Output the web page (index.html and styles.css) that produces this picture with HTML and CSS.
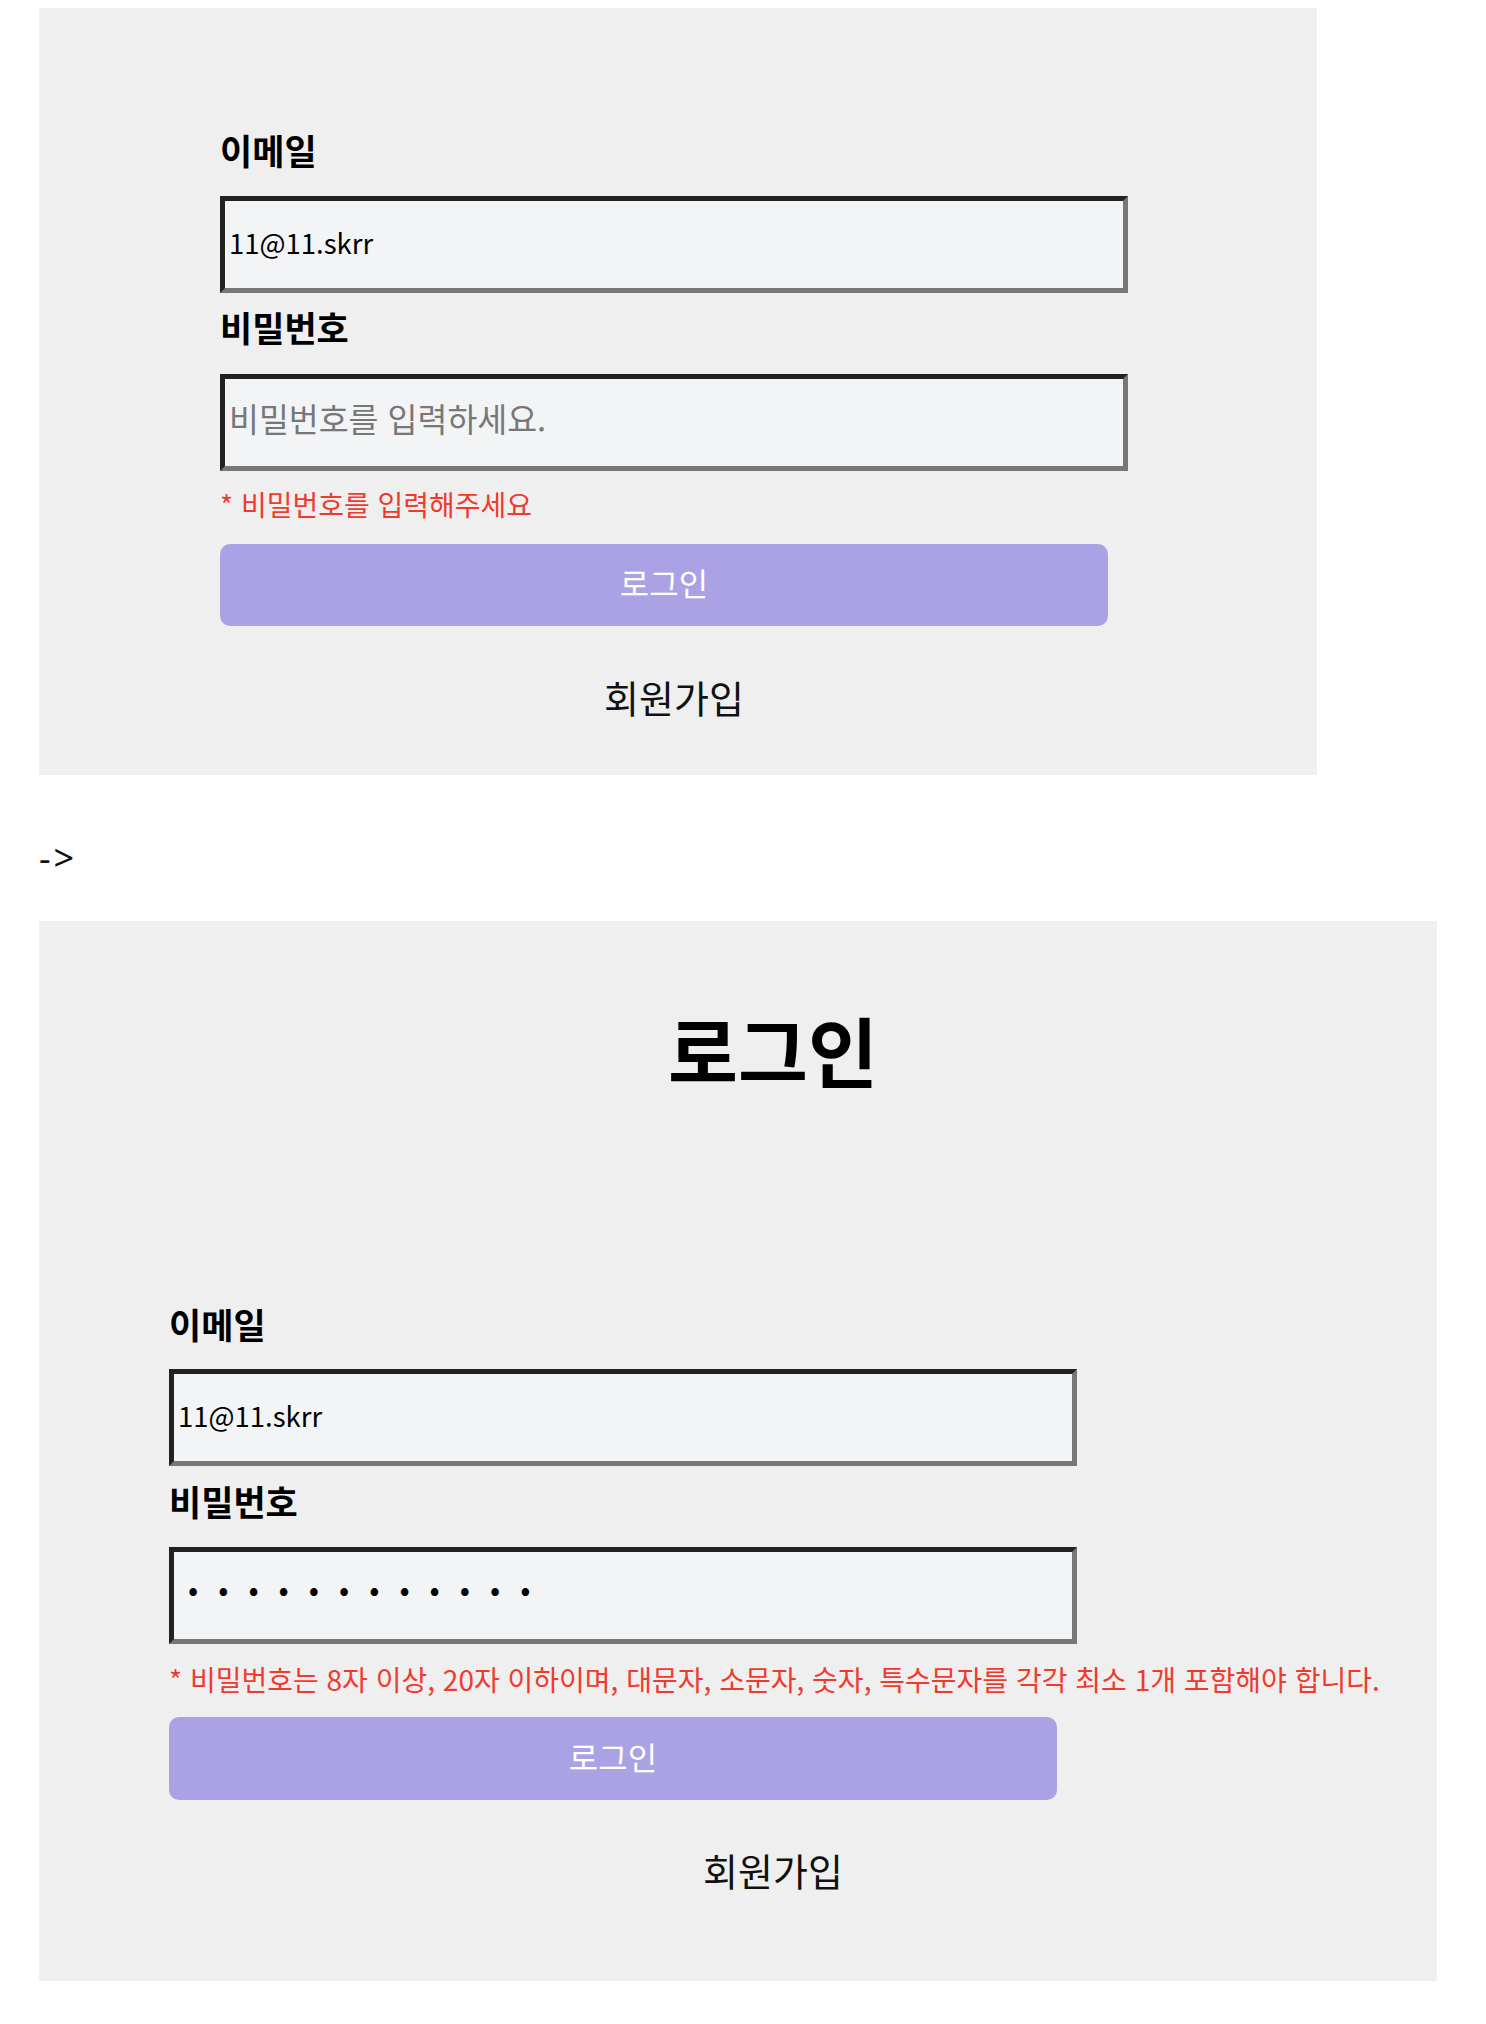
FILE: index.html
```html
<!DOCTYPE html>
<html lang="ko">
<head>
<meta charset="utf-8">
<title>로그인 변경</title>
<link rel="stylesheet" href="styles.css">
</head>
<body>
  <section class="panel panel-before">
    <form class="login-form">
      <label class="field-label">이메일</label>
      <input class="field-input" type="email" value="11@11.skrr">
      <label class="field-label">비밀번호</label>
      <input class="field-input" type="password" placeholder="비밀번호를 입력하세요.">
      <p class="error">* 비밀번호를 입력해주세요</p>
      <button class="login-btn" type="button">로그인</button>
      <a class="signup">회원가입</a>
    </form>
  </section>

  <p class="arrow">-&gt;</p>

  <section class="panel panel-after">
    <form class="login-form">
      <h1 class="title">로그인</h1>
      <label class="field-label">이메일</label>
      <input class="field-input" type="email" value="11@11.skrr">
      <label class="field-label">비밀번호</label>
      <input class="field-input pw" type="password" value="abcdefghijkl">
      <p class="error">* 비밀번호는 8자 이상, 20자 이하이며, 대문자, 소문자, 숫자, 특수문자를 각각 최소 1개 포함해야 합니다.</p>
      <button class="login-btn" type="button">로그인</button>
      <a class="signup">회원가입</a>
    </form>
  </section>
</body>
</html>
```
FILE: styles.css
```css
html, body {
  margin: 0;
  padding: 0;
  background: #ffffff;
}

body {
  padding: 8px 0 0 39px;
  font-family: "Noto Sans CJK KR", "Noto Sans", sans-serif;
  color: #000;
}

.panel {
  box-sizing: border-box;
  background: #efefef;
}

.panel-before {
  width: 1278px;
  padding: 122px 0 58px 181px;
  --g-label-input: 26px;
  --g-input-label: 14px;
  --g-label-input2: 27px;
  --g-input-error: 18px;
  --g-error-btn: 25px;
  --g-btn-signup: 51px;
  --btn-h: 82px;
}

.panel-after {
  width: 1398px;
  padding: 88px 0 91px 130px;
  --g-label-input: 25px;
  --g-input-label: 15px;
  --g-label-input2: 26px;
  --g-input-error: 20px;
  --g-error-btn: 23px;
  --g-btn-signup: 50px;
  --btn-h: 83px;
}

.panel-before .login-form { width: 908px; }
.panel-after .login-form { width: 1208px; }

.login-form {
  display: flex;
  flex-direction: column;
  align-items: flex-start;
}

.title {
  align-self: stretch;
  margin: 0 0 215px;
  text-align: center;
  font-size: 76px;
  line-height: 80px;
  font-weight: 700;
}

.field-label {
  display: block;
  font-size: 35px;
  line-height: 40px;
  font-weight: 700;
  margin-bottom: var(--g-label-input);
}

.field-label:nth-of-type(2) {
  margin-bottom: var(--g-label-input2);
}

.field-input {
  box-sizing: border-box;
  width: 908px;
  height: 97px;
  margin: 0 0 var(--g-input-label);
  padding: 0 4px 5px;
  background: #f3f4f6;
  border-style: solid;
  border-width: 5px;
  border-color: #222222 #777777 #777777 #222222;
  font-family: "Noto Sans CJK KR", "Noto Sans", sans-serif;
  font-size: 27.5px;
  color: #000;
  outline: none;
}

.field-input.pw {
  padding: 0 4px 16px 14px;
  letter-spacing: 20px;
  font-size: 30px;
}

.field-input[type="password"] {
  margin-bottom: var(--g-input-error);
}

.field-input::placeholder {
  color: #777777;
  font-size: 32.5px;
}

.error {
  margin: 0 0 var(--g-error-btn);
  font-size: 28px;
  line-height: 30px;
  color: #ef3a2d;
  white-space: nowrap;
}

.login-btn {
  width: 888px;
  height: var(--btn-h);
  margin: 0 0 var(--g-btn-signup);
  padding: 0 0 6px;
  border: none;
  border-radius: 10px;
  background: #aba2e5;
  color: #ffffff;
  font-family: "Noto Sans CJK KR", "Noto Sans", sans-serif;
  font-size: 32px;
}

.signup {
  align-self: stretch;
  text-align: center;
  font-size: 38px;
  line-height: 40px;
  color: #111;
}

.arrow {
  margin: 63px 0 43px;
  font-family: "Noto Sans", "Noto Sans CJK KR", sans-serif;
  font-size: 36px;
  line-height: 40px;
  letter-spacing: 3px;
  color: #111;
}
```
